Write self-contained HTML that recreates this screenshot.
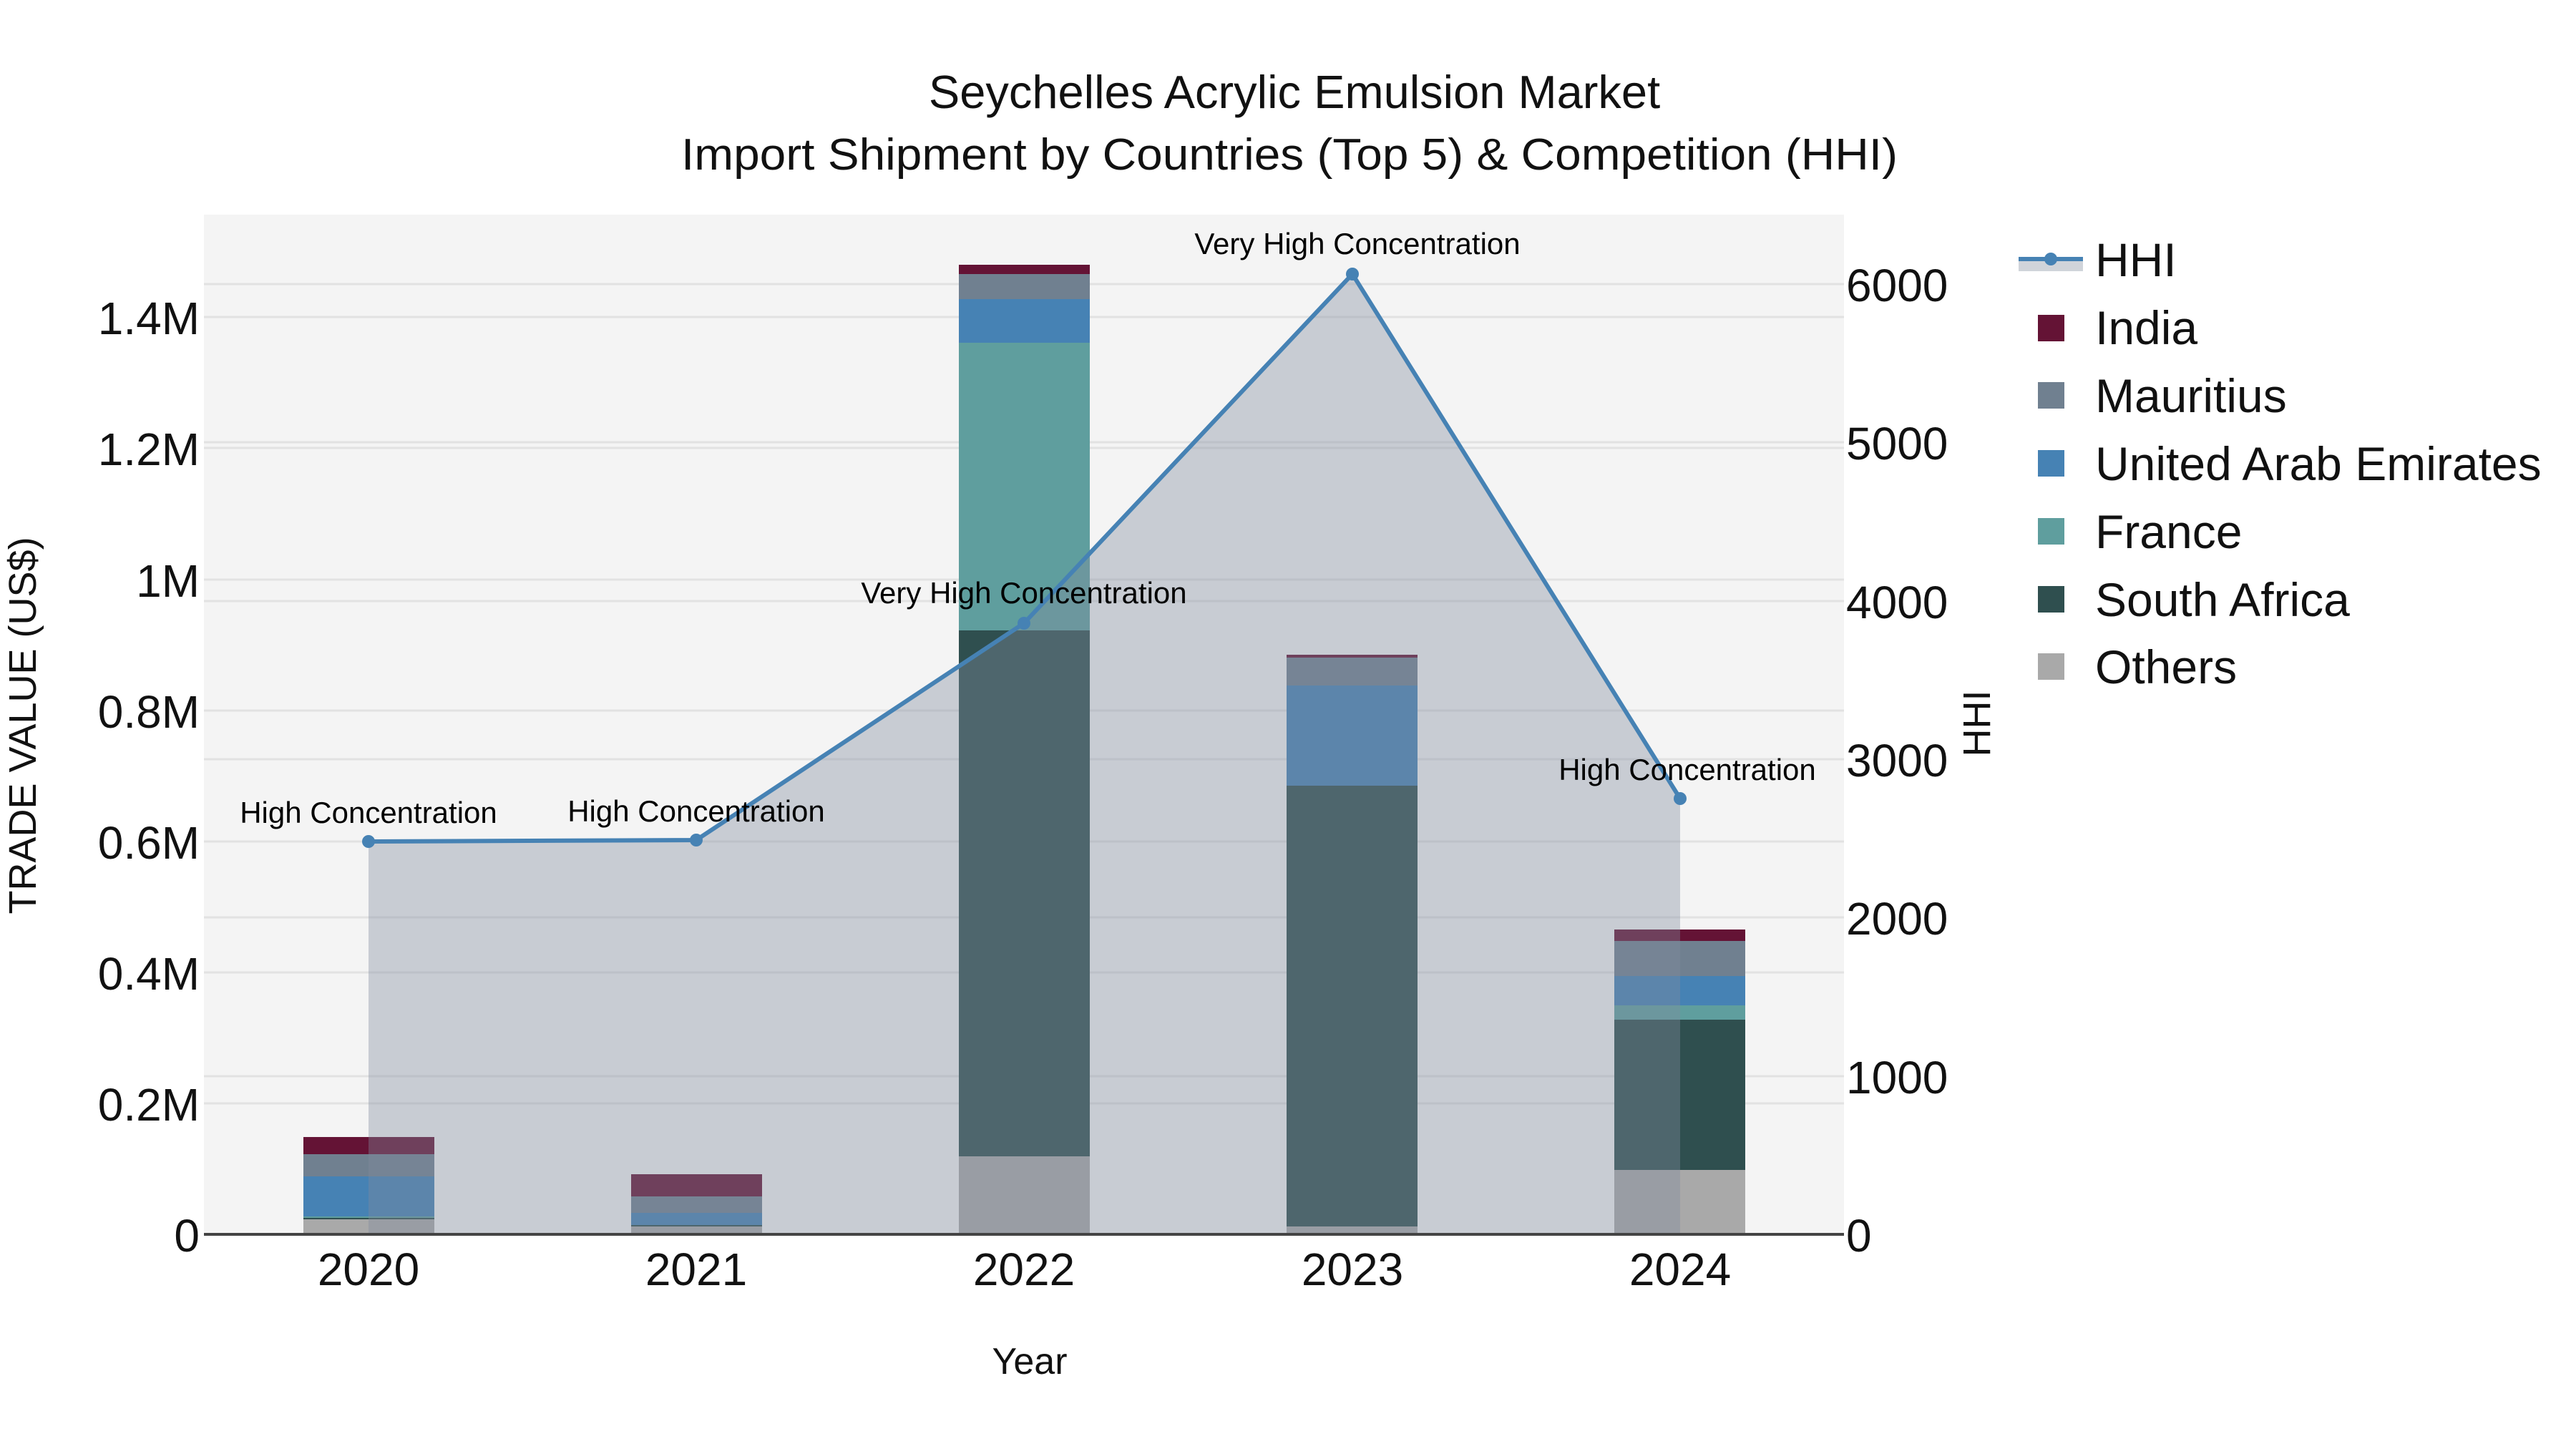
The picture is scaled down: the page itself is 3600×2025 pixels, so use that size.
<!DOCTYPE html>
<html><head><meta charset="utf-8"><style>html,body{margin:0;padding:0;background:#fff}svg{display:block}text{font-family:"Liberation Sans",Arial,sans-serif}</style></head>
<body>
<svg width="3600" height="2025" viewBox="0 0 3600 2025" xmlns="http://www.w3.org/2000/svg">
<rect width="3600" height="2025" fill="#fff"/>
<rect x="285" y="300" width="2292" height="1425" fill="#f4f4f4"/>
<g stroke="#e2e2e2" stroke-width="3">
<line x1="285" x2="2577" y1="443" y2="443"/><line x1="285" x2="2577" y1="626" y2="626"/>
<line x1="285" x2="2577" y1="810" y2="810"/><line x1="285" x2="2577" y1="993" y2="993"/>
<line x1="285" x2="2577" y1="1176" y2="1176"/><line x1="285" x2="2577" y1="1359" y2="1359"/>
<line x1="285" x2="2577" y1="1542" y2="1542"/>
<line x1="285" x2="2577" y1="397" y2="397"/><line x1="285" x2="2577" y1="618" y2="618"/>
<line x1="285" x2="2577" y1="840" y2="840"/><line x1="285" x2="2577" y1="1061" y2="1061"/>
<line x1="285" x2="2577" y1="1282" y2="1282"/><line x1="285" x2="2577" y1="1504" y2="1504"/>
</g>
<g>
<rect x="424" y="1589" width="183" height="24" fill="#641335"/>
<rect x="424" y="1613" width="183" height="31" fill="#708090"/>
<rect x="424" y="1644" width="183" height="56" fill="#4682b4"/>
<rect x="424" y="1700" width="183" height="2" fill="#5f9e9e"/>
<rect x="424" y="1702" width="183" height="2" fill="#2f4f4f"/>
<rect x="424" y="1704" width="183" height="21" fill="#a9a9a9"/>
<rect x="882" y="1641" width="183" height="31" fill="#641335"/>
<rect x="882" y="1672" width="183" height="23" fill="#708090"/>
<rect x="882" y="1695" width="183" height="17" fill="#4682b4"/>
<rect x="882" y="1712" width="183" height="2" fill="#2f4f4f"/>
<rect x="882" y="1714" width="183" height="11" fill="#a9a9a9"/>
<rect x="1340" y="370" width="183" height="13" fill="#641335"/>
<rect x="1340" y="383" width="183" height="35" fill="#708090"/>
<rect x="1340" y="418" width="183" height="61" fill="#4682b4"/>
<rect x="1340" y="479" width="183" height="402" fill="#5f9e9e"/>
<rect x="1340" y="881" width="183" height="735" fill="#2f4f4f"/>
<rect x="1340" y="1616" width="183" height="109" fill="#a9a9a9"/>
<rect x="1798" y="915" width="183" height="4" fill="#641335"/>
<rect x="1798" y="919" width="183" height="39" fill="#708090"/>
<rect x="1798" y="958" width="183" height="140" fill="#4682b4"/>
<rect x="1798" y="1098" width="183" height="616" fill="#2f4f4f"/>
<rect x="1798" y="1714" width="183" height="11" fill="#a9a9a9"/>
<rect x="2256" y="1299" width="183" height="16" fill="#641335"/>
<rect x="2256" y="1315" width="183" height="49" fill="#708090"/>
<rect x="2256" y="1364" width="183" height="41" fill="#4682b4"/>
<rect x="2256" y="1405" width="183" height="20" fill="#5f9e9e"/>
<rect x="2256" y="1425" width="183" height="210" fill="#2f4f4f"/>
<rect x="2256" y="1635" width="183" height="90" fill="#a9a9a9"/>
</g>
<polygon points="515,1725 515,1176 973,1174 1431,871 1890,383 2348,1116 2348,1725" fill="rgb(129,139,158)" fill-opacity="0.38"/>
<polyline points="515,1176 973,1174 1431,871 1890,383 2348,1116" fill="none" stroke="#4682b4" stroke-width="6" stroke-linejoin="round"/>
<g fill="#4682b4"><circle cx="515" cy="1176" r="9"/><circle cx="973" cy="1174" r="9"/><circle cx="1431" cy="871" r="9"/><circle cx="1890" cy="383" r="9"/><circle cx="2348" cy="1116" r="9"/></g>
<line x1="285" x2="2577" y1="1725" y2="1725" stroke="#444" stroke-width="4"/>
<g font-size="42" fill="#000" text-anchor="middle">
<text x="515" y="1150">High Concentration</text>
<text x="973" y="1148">High Concentration</text>
<text x="1431" y="843">Very High Concentration</text>
<text x="1897" y="355">Very High Concentration</text>
<text x="2358" y="1090">High Concentration</text>
</g>
<g fill="#111" text-anchor="middle">
<text x="1809" y="151" font-size="65">Seychelles Acrylic Emulsion Market</text>
<text x="1802" y="237" font-size="62" textLength="1700" lengthAdjust="spacingAndGlyphs">Import Shipment by Countries (Top 5) &amp; Competition (HHI)</text>
</g>
<g font-size="64" fill="#111" text-anchor="end">
<text x="279" y="467">1.4M</text><text x="279" y="650">1.2M</text><text x="279" y="834">1M</text>
<text x="279" y="1017">0.8M</text><text x="279" y="1200">0.6M</text><text x="279" y="1383">0.4M</text>
<text x="279" y="1566">0.2M</text><text x="279" y="1749">0</text>
</g>
<g font-size="64" fill="#111">
<text x="2580" y="421">6000</text><text x="2580" y="642">5000</text><text x="2580" y="864">4000</text>
<text x="2580" y="1085">3000</text><text x="2580" y="1306">2000</text><text x="2580" y="1528">1000</text>
<text x="2580" y="1749">0</text>
</g>
<g font-size="64" fill="#111" text-anchor="middle">
<text x="515" y="1796">2020</text><text x="973" y="1796">2021</text><text x="1431" y="1796">2022</text>
<text x="1890" y="1796">2023</text><text x="2348" y="1796">2024</text>
</g>
<text x="1439" y="1920" font-size="52" fill="#111" text-anchor="middle">Year</text>
<text transform="translate(50,1014) rotate(-90)" font-size="54" fill="#111" text-anchor="middle">TRADE VALUE (US$)</text>
<text transform="translate(2781,1011) rotate(-90)" font-size="54" fill="#111" text-anchor="middle">HHI</text>
<rect x="2821" y="365" width="90" height="14" fill="#d0d4da"/>
<line x1="2821" x2="2911" y1="362" y2="362" stroke="#4682b4" stroke-width="6"/>
<circle cx="2866" cy="362" r="9" fill="#4682b4"/>
<rect x="2848" y="440" width="37" height="37" fill="#641335"/>
<rect x="2848" y="534" width="37" height="37" fill="#708090"/>
<rect x="2848" y="629" width="37" height="37" fill="#4682b4"/>
<rect x="2848" y="724" width="37" height="37" fill="#5f9e9e"/>
<rect x="2848" y="819" width="37" height="37" fill="#2f4f4f"/>
<rect x="2848" y="913" width="37" height="37" fill="#a9a9a9"/>
<g font-size="66" fill="#111">
<text x="2928" y="386">HHI</text><text x="2928" y="481">India</text><text x="2928" y="576">Mauritius</text>
<text x="2928" y="671">United Arab Emirates</text><text x="2928" y="766">France</text>
<text x="2928" y="861">South Africa</text><text x="2928" y="955">Others</text>
</g>
</svg>
</body></html>
